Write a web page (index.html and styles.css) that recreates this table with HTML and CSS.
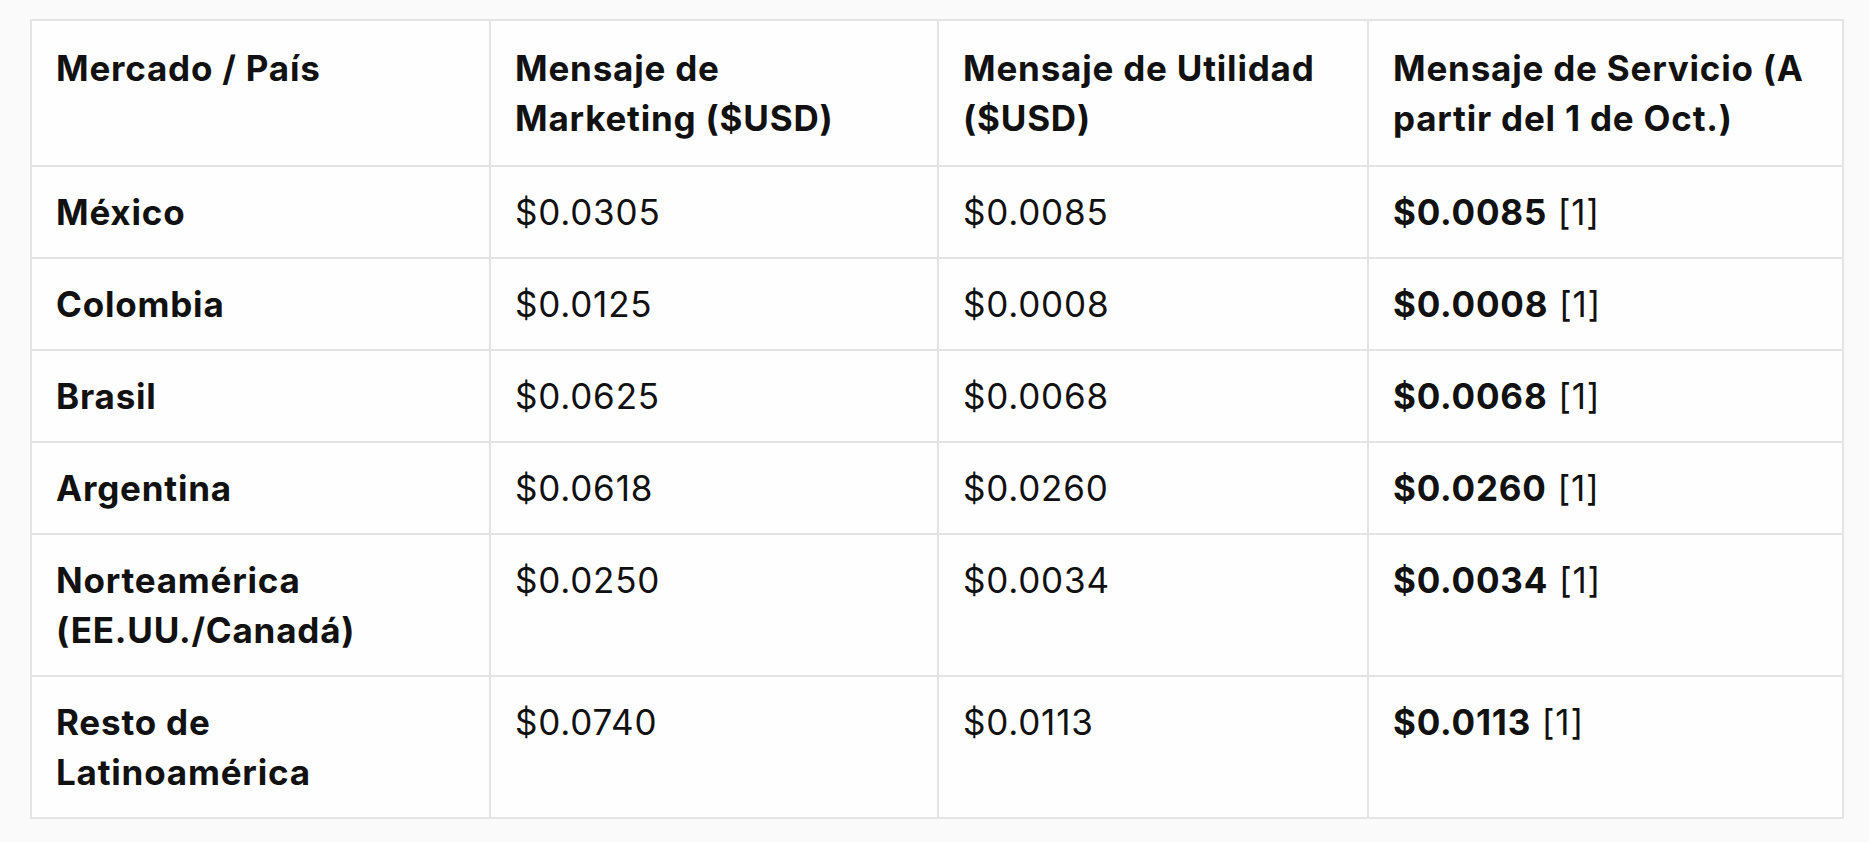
FILE: index.html
```html
<!DOCTYPE html>
<html lang="es">
<head>
    <meta charset="UTF-8">
    <meta name="viewport" content="width=device-width, initial-scale=1.0">
    <title>Precios por mensaje</title>
    <link rel="stylesheet" href="styles.css">
</head>
<body>
    <table class="precios">
        <colgroup>
            <col class="c1">
            <col class="c2">
            <col class="c3">
            <col class="c4">
        </colgroup>
        <thead>
            <tr>
                <th>Mercado / País</th>
                <th>Mensaje de<br>Marketing ($USD)</th>
                <th>Mensaje de Utilidad<br>($USD)</th>
                <th>Mensaje de Servicio (A<br>partir del 1 de Oct.)</th>
            </tr>
        </thead>
        <tbody>
            <tr>
                <td class="pais">México</td>
                <td>$0.0305</td>
                <td>$0.0085</td>
                <td><strong>$0.0085</strong> [1]</td>
            </tr>
            <tr>
                <td class="pais">Colombia</td>
                <td>$0.0125</td>
                <td>$0.0008</td>
                <td><strong>$0.0008</strong> [1]</td>
            </tr>
            <tr>
                <td class="pais">Brasil</td>
                <td>$0.0625</td>
                <td>$0.0068</td>
                <td><strong>$0.0068</strong> [1]</td>
            </tr>
            <tr>
                <td class="pais">Argentina</td>
                <td>$0.0618</td>
                <td>$0.0260</td>
                <td><strong>$0.0260</strong> [1]</td>
            </tr>
            <tr>
                <td class="pais">Norteamérica<br>(EE.UU./Canadá)</td>
                <td>$0.0250</td>
                <td>$0.0034</td>
                <td><strong>$0.0034</strong> [1]</td>
            </tr>
            <tr>
                <td class="pais">Resto de<br>Latinoamérica</td>
                <td>$0.0740</td>
                <td>$0.0113</td>
                <td><strong>$0.0113</strong> [1]</td>
            </tr>
        </tbody>
    </table>
</body>
</html>
```

FILE: styles.css
```css
body {
    font-family: Inter, "Noto Sans", sans-serif;
    background-color: #fafafa;
    color: #111;
    margin: 0;
    padding: 19px 27px 24px 30px;
}
.precios {
    width: 1812px;
    border-collapse: collapse;
    background-color: #fefefe;
    table-layout: fixed;
    font-size: 35px;
    line-height: 50px;
    letter-spacing: 0.8px;
}
.c1 { width: 459px; }
.c2 { width: 448px; }
.c3 { width: 430px; }
.c4 { width: 475px; }
th, td {
    border: 2px solid #e4e4e4;
    text-align: left;
    vertical-align: top;
    padding: 20px 24px;
}
th {
    font-weight: 700;
    padding-top: 22px;
    padding-bottom: 22px;
}
td {
    font-weight: 400;
}
.pais, strong {
    font-weight: 700;
}
```
